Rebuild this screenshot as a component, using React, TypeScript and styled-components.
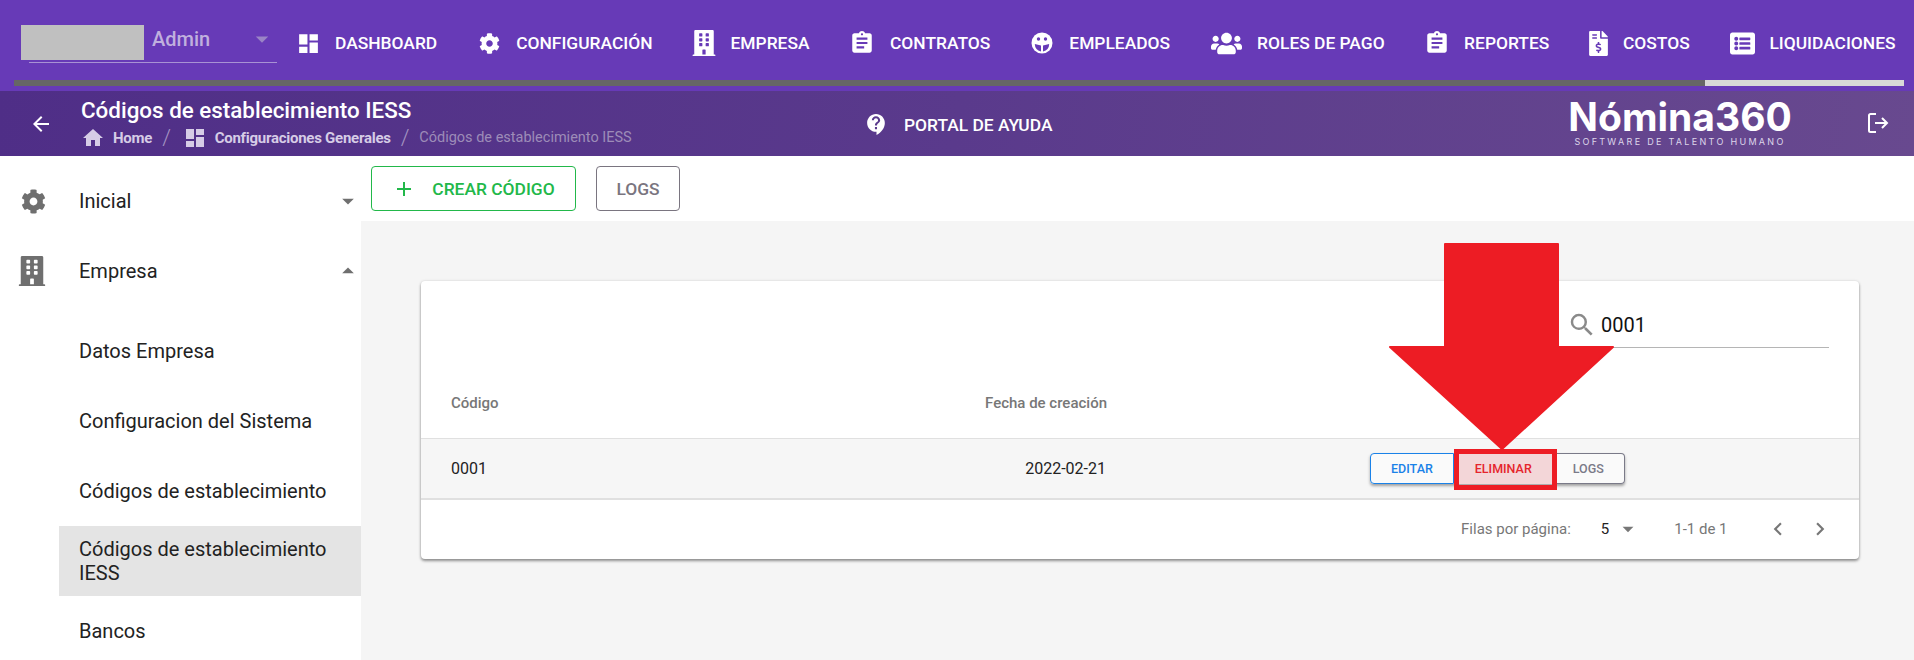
import { ReactNode } from "react";
import styled, { createGlobalStyle } from "styled-components";
import {
  MdDashboard,
  MdArrowBack,
  MdHome,
  MdSearch,
  MdArrowDropDown,
  MdArrowDropUp,
  MdAdd,
  MdChevronLeft,
  MdChevronRight,
  MdContactSupport,
  MdAssignment,
} from "react-icons/md";
import {
  FaCog,
  FaBuilding,
  FaUsers,
  FaFileInvoiceDollar,
  FaListAlt,
} from "react-icons/fa";

const GlobalStyle = createGlobalStyle`
  html, body {
    margin: 0;
    padding: 0;
    height: 660px;
    overflow: hidden;
    background: #fff;
    font-family: Roboto, "Liberation Sans", sans-serif;
  }
  * { box-sizing: border-box; }
`;

const Page = styled.div`
  width: 1914px;
  height: 660px;
  overflow: hidden;
  display: flex;
  flex-direction: column;
`;

/* top bar */
const TopBar = styled.header`
  height: 91px;
  background: #673ab7;
  padding: 0 10px 0 14px;
  display: flex;
  flex-direction: column;
`;
const TopRow = styled.div`
  height: 80px;
  display: flex;
  align-items: flex-start;
`;
const UserSelect = styled.div`
  width: 248px;
  margin: 25px 0 0 15px;
  height: 38px;
  display: flex;
  position: relative;
  border-bottom: 1px solid #a892d4;
`;
const Avatar = styled.div`
  width: 123px;
  height: 35px;
  background: #c0c0c0;
  margin-left: -8px;
  flex-shrink: 0;
`;
const UserName = styled.span`
  margin-left: 8px;
  font-size: 20px;
  font-weight: 500;
  line-height: 28px;
  color: #c0b0de;
`;
const UserCaret = styled(MdArrowDropDown)`
  position: absolute;
  right: 0;
  top: -1px;
  font-size: 30px;
  color: #9a84c6;
`;
const Nav = styled.nav`
  display: flex;
  margin-left: 21px;
  gap: 41px;
  height: 86px;
  align-items: center;
`;
const NavItem = styled.div`
  display: flex;
  align-items: center;
  gap: 16px;
  color: #fff;
  font-size: 17.4px;
  font-weight: 500;
  white-space: nowrap;
`;
const NavIcon = styled.span<{ $w: number }>`
  width: ${(p) => p.$w}px;
  display: flex;
  justify-content: center;
  align-items: center;
  svg {
    flex-shrink: 0;
  }
`;
const TabLine = styled.div`
  height: 6px;
  display: flex;
  background: #666;
`;
const TabActive = styled.div`
  width: 199px;
  margin-left: auto;
  background: #d8d8d8;
`;

/* second bar */
const SubBar = styled.div`
  height: 65px;
  background: linear-gradient(100deg, #4f2e87 0%, #5a3a8c 50%, #68498f 100%);
  display: flex;
  align-items: center;
  color: #fff;
`;
const BackBtn = styled.div`
  width: 82px;
  display: flex;
  justify-content: center;
  font-size: 24px;
`;
const TitleBlock = styled.div`
  width: 782px;
  display: flex;
  flex-direction: column;
`;
const Title = styled.div`
  font-size: 22.4px;
  font-weight: 500;
  line-height: 24px;
  margin-left: -1px;
`;
const Crumbs = styled.div`
  display: flex;
  align-items: center;
  height: 24px;
  margin-top: 4px;
  font-size: 15px;
  color: #d6cce6;
  font-weight: 700;
  letter-spacing: -0.25px;
`;
const CrumbIcon = styled.span`
  display: flex;
  font-size: 24px;
  margin: 0 8px 0 -1px;
`;
const Slash = styled.span<{ $after: number }>`
  margin: 0 ${(p) => p.$after}px 0 10px;
  font-size: 22px;
  font-weight: 300;
  color: #a493c2;
`;
const CrumbLast = styled.span`
  color: #9d8cb8;
  font-size: 14.5px;
  font-weight: 400;
  letter-spacing: 0;
`;
const Help = styled.div`
  width: 705px;
  display: flex;
  align-items: center;
  gap: 15px;
  padding-top: 2px;
  font-size: 17.4px;
  font-weight: 500;
`;
const Logo = styled.div`
  width: 222px;
  display: flex;
  flex-direction: column;
  align-items: center;
  margin-top: -1px;
`;
const LogoMain = styled.div`
  font-family: Inter, sans-serif;
  font-size: 39px;
  font-weight: 700;
  line-height: 38px;
  white-space: nowrap;
`;
const LogoSub = styled.div`
  font-family: Inter, sans-serif;
  font-size: 9px;
  letter-spacing: 2.3px;
  line-height: 12px;
  white-space: nowrap;
  color: #ddd5ea;
`;
const LogoutIcon = styled.svg`
  width: 24px;
  height: 24px;
  margin: -2px 0 0 75px;
`;

/* body */
const Body = styled.div`
  flex: 1;
  display: flex;
  min-height: 0;
`;
const Sidebar = styled.aside`
  width: 361px;
  flex-shrink: 0;
  padding-top: 10px;
`;
const SideGroup = styled.div<{ $gap?: number }>`
  height: 70px;
  display: flex;
  align-items: center;
  font-size: 20px;
  color: #222;
  margin-bottom: ${(p) => p.$gap ?? 0}px;
`;
const SideIcon = styled.span<{ $left: number }>`
  width: 79px;
  padding-left: ${(p) => p.$left}px;
  display: flex;
  color: #6f6f6f;
  svg {
    flex-shrink: 0;
  }
`;
const SideLabel = styled.span`
  flex: 1;
`;
const SideCaret = styled.span`
  display: flex;
  font-size: 28px;
  margin-right: -1px;
  color: #6f6f6f;
`;
const SubItem = styled.div<{ $active?: boolean }>`
  height: 70px;
  margin-left: 59px;
  padding: 0 20px;
  display: flex;
  align-items: center;
  font-size: 20px;
  line-height: 24px;
  color: #222;
  background: ${(p) => (p.$active ? "#e4e4e4" : "transparent")};
`;

const Content = styled.main`
  flex: 1;
  display: flex;
  flex-direction: column;
  min-width: 0;
`;
const Toolbar = styled.div`
  height: 65px;
  padding: 10px 0 0 10px;
  display: flex;
  gap: 20px;
  align-items: flex-start;
`;
const ToolButton = styled.button<{ $color: string; $w: number }>`
  width: ${(p) => p.$w}px;
  height: 45px;
  display: flex;
  align-items: center;
  justify-content: center;
  gap: 16px;
  background: #fff;
  border: 1px solid ${(p) => p.$color};
  border-radius: 4px;
  color: ${(p) => p.$color};
  font-family: inherit;
  font-size: 17.4px;
  font-weight: 500;
`;
const Stage = styled.div`
  flex: 1;
  background: #f5f5f5;
  padding: 60px 55px 0 60px;
`;
const Card = styled.section`
  position: relative;
  height: 278px;
  background: #fff;
  border-radius: 4px;
  box-shadow: 0 2px 3px rgba(0, 0, 0, 0.4), 0 0 3px rgba(0, 0, 0, 0.12);
`;
const SearchRow = styled.div`
  height: 87px;
  padding: 33px 30px 0 0;
  display: flex;
  justify-content: flex-end;
`;
const SearchBox = styled.div`
  width: 259px;
  height: 34px;
  display: flex;
  align-items: flex-start;
  gap: 4px;
  border-bottom: 1px solid #b5b5b5;
  font-size: 20px;
  color: #111;
  line-height: 22px;
  svg {
    margin: -4px 0 0 -3px;
    flex-shrink: 0;
  }
`;
const Row = styled.div<{ $h: number; $bg?: string }>`
  display: grid;
  grid-template-columns: 534px 122px 1fr;
  align-items: center;
  height: ${(p) => p.$h}px;
  padding-left: 30px;
  background: ${(p) => p.$bg ?? "transparent"};
`;
const HeadCell = styled.div<{ $right?: boolean }>`
  font-size: 15px;
  font-weight: 500;
  color: #777;
  white-space: nowrap;
  display: flex;
  justify-content: ${(p) => (p.$right ? "flex-end" : "flex-start")};
`;
const Cell = styled.div<{ $right?: boolean }>`
  font-size: 16px;
  color: #222;
  white-space: nowrap;
  text-align: ${(p) => (p.$right ? "right" : "left")};
  padding-right: ${(p) => (p.$right ? 1 : 0)}px;
`;
const Actions = styled.div`
  margin-left: 263px;
  display: flex;
  height: 31px;
  width: 255px;
  border-radius: 4px;
  box-shadow: 0 2px 3px rgba(0, 0, 0, 0.35);
`;
const ActionButton = styled.button<{ $color: string; $pos: "left" | "mid" | "right" }>`
  position: relative;
  padding: 0 20px;
  height: 31px;
  background: #fafafa;
  border: 1px solid ${(p) => p.$color};
  border-left-width: ${(p) => (p.$pos === "left" ? 1 : 0)}px;
  border-radius: ${(p) =>
    p.$pos === "left" ? "4px 0 0 4px" : p.$pos === "right" ? "0 4px 4px 0" : "0"};
  color: ${(p) => p.$color};
  font-family: inherit;
  font-size: 12.5px;
  font-weight: 500;
  white-space: nowrap;
`;
const DeleteButton = styled(ActionButton)`
  background: #f3d6d8;
  border: 0;
  padding: 0 21px;
  z-index: 2;
  &::after {
    content: "";
    position: absolute;
    inset: -4px -4px -6px 0;
    border: 5px solid #ed1c24;
  }
`;
const Divider = styled.div<{ $h: number }>`
  height: ${(p) => p.$h}px;
  background: #e0e0e0;
`;
const Footer = styled.div`
  height: 58px;
  display: flex;
  align-items: center;
  justify-content: flex-end;
  padding-right: 26px;
  font-size: 15px;
  color: #777;
`;
const PerPage = styled.span`
  color: #222;
  font-size: 15px;
  margin-left: 30px;
`;
const FooterCaret = styled.span`
  display: flex;
  font-size: 26px;
  margin: 0 33px 0 6px;
  color: #777;
`;
const Pager = styled.span`
  display: flex;
  font-size: 26px;
  color: #777;
  gap: 16.5px;
  margin-left: 37px;
`;
const BigArrow = styled.svg`
  position: absolute;
  left: 968px;
  top: -38px;
  width: 225px;
  height: 207px;
  z-index: 3;
`;

function Tab({ icon, width, children }: { icon: ReactNode; width: number; children: ReactNode }) {
  return (
    <NavItem>
      <NavIcon $w={width}>{icon}</NavIcon>
      {children}
    </NavItem>
  );
}

// the face on the empleados tab, none of the packs has this exact one
function FaceIcon() {
  return (
    <svg width="22" height="22" viewBox="0 0 22 22">
      <circle cx="11" cy="11" r="10.500" fill="#fff" />
      <circle cx="7.500" cy="7" r="1.700" fill="#673ab7" />
      <circle cx="14.500" cy="7" r="1.700" fill="#673ab7" />
      <path d="M3.800 12L10 13.500V19.500A8 8 0 0 1 3.800 12Z" fill="#673ab7" />
      <path d="M18.200 12L12 13.500V19.500A8 8 0 0 0 18.200 12Z" fill="#673ab7" />
    </svg>
  );
}

export default function App() {
  return (
    <Page>
      <GlobalStyle />
      <TopBar>
        <TopRow>
          <UserSelect>
            <Avatar />
            <UserName>Admin</UserName>
            <UserCaret />
          </UserSelect>
          <Nav>
            <Tab width={21} icon={<MdDashboard size={25} />}>DASHBOARD</Tab>
            <Tab width={22} icon={<FaCog size={21} />}>CONFIGURACIÓN</Tab>
            <Tab width={21} icon={<FaBuilding size={26} />}>EMPRESA</Tab>
            <Tab width={23.5} icon={<MdAssignment size={26} />}>CONTRATOS</Tab>
            <Tab width={22} icon={<FaceIcon />}>EMPLEADOS</Tab>
            <Tab width={30} icon={<FaUsers size={31} />}>ROLES DE PAGO</Tab>
            <Tab width={22.5} icon={<MdAssignment size={26} />}>REPORTES</Tab>
            <Tab width={16.7} icon={<FaFileInvoiceDollar size={25} />}>COSTOS</Tab>
            <Tab width={22.7} icon={<FaListAlt size={25} />}>LIQUIDACIONES</Tab>
          </Nav>
        </TopRow>
        <TabLine>
          <TabActive />
        </TabLine>
      </TopBar>
      <SubBar>
        <BackBtn>
          <MdArrowBack />
        </BackBtn>
        <TitleBlock>
          <Title>Códigos de establecimiento IESS</Title>
          <Crumbs>
            <CrumbIcon><MdHome /></CrumbIcon>
            Home
            <Slash $after={13}>/</Slash>
            <CrumbIcon><MdDashboard /></CrumbIcon>
            Configuraciones Generales
            <Slash $after={10}>/</Slash>
            <CrumbLast>Códigos de establecimiento IESS</CrumbLast>
          </Crumbs>
        </TitleBlock>
        <Help>
          <MdContactSupport size={25} />
          PORTAL DE AYUDA
        </Help>
        <Logo>
          <LogoMain>Nómina360</LogoMain>
          <LogoSub>SOFTWARE DE TALENTO HUMANO</LogoSub>
        </Logo>
        <LogoutIcon viewBox="0 0 24 24" fill="none" stroke="#fff" strokeWidth="2">
          <path d="M10 3H4.500A1.500 1.500 0 0 0 3 4.500V19.500A1.500 1.500 0 0 0 4.500 21H10" />
          <path d="M9 12h12M16 7l5 5-5 5" />
        </LogoutIcon>
      </SubBar>
      <Body>
        <Sidebar>
          <SideGroup>
            <SideIcon $left={21}><FaCog size={25} /></SideIcon>
            <SideLabel>Inicial</SideLabel>
            <SideCaret><MdArrowDropDown /></SideCaret>
          </SideGroup>
          <SideGroup $gap={10}>
            <SideIcon $left={17}><FaBuilding size={30} /></SideIcon>
            <SideLabel>Empresa</SideLabel>
            <SideCaret><MdArrowDropUp /></SideCaret>
          </SideGroup>
          <SubItem>Datos Empresa</SubItem>
          <SubItem>Configuracion del Sistema</SubItem>
          <SubItem>Códigos de establecimiento</SubItem>
          <SubItem $active>Códigos de establecimiento IESS</SubItem>
          <SubItem>Bancos</SubItem>
        </Sidebar>
        <Content>
          <Toolbar>
            <ToolButton $color="#22b84a" $w={205}>
              <MdAdd size={24} />
              CREAR CÓDIGO
            </ToolButton>
            <ToolButton $color="#7a7580" $w={84}>LOGS</ToolButton>
          </Toolbar>
          <Stage>
            <Card>
              <BigArrow viewBox="0 0 225 207">
                <path
                  d="M56 1H169V104H224L113 206L1 104H56Z"
                  fill="#ed1c24"
                  stroke="#ed1c24"
                  strokeWidth="2"
                  strokeLinejoin="round"
                />
              </BigArrow>
              <SearchRow>
                <SearchBox>
                  <MdSearch size={30} color="#8a8a8a" />
                  0001
                </SearchBox>
              </SearchRow>
              <Row $h={70}>
                <HeadCell>Código</HeadCell>
                <HeadCell $right>Fecha de creación</HeadCell>
                <span />
              </Row>
              <Divider $h={1} />
              <Row $h={59} $bg="#f6f6f6">
                <Cell>0001</Cell>
                <Cell $right>2022-02-21</Cell>
                <Actions>
                  <ActionButton $color="#1a82e8" $pos="left">EDITAR</ActionButton>
                  <DeleteButton $color="#e5252c" $pos="mid">ELIMINAR</DeleteButton>
                  <ActionButton $color="#7a7a88" $pos="right">LOGS</ActionButton>
                </Actions>
              </Row>
              <Divider $h={2} />
              <Footer>
                Filas por página:
                <PerPage>5</PerPage>
                <FooterCaret><MdArrowDropDown /></FooterCaret>
                1-1 de 1
                <Pager>
                  <MdChevronLeft />
                  <MdChevronRight />
                </Pager>
              </Footer>
            </Card>
          </Stage>
        </Content>
      </Body>
    </Page>
  );
}
